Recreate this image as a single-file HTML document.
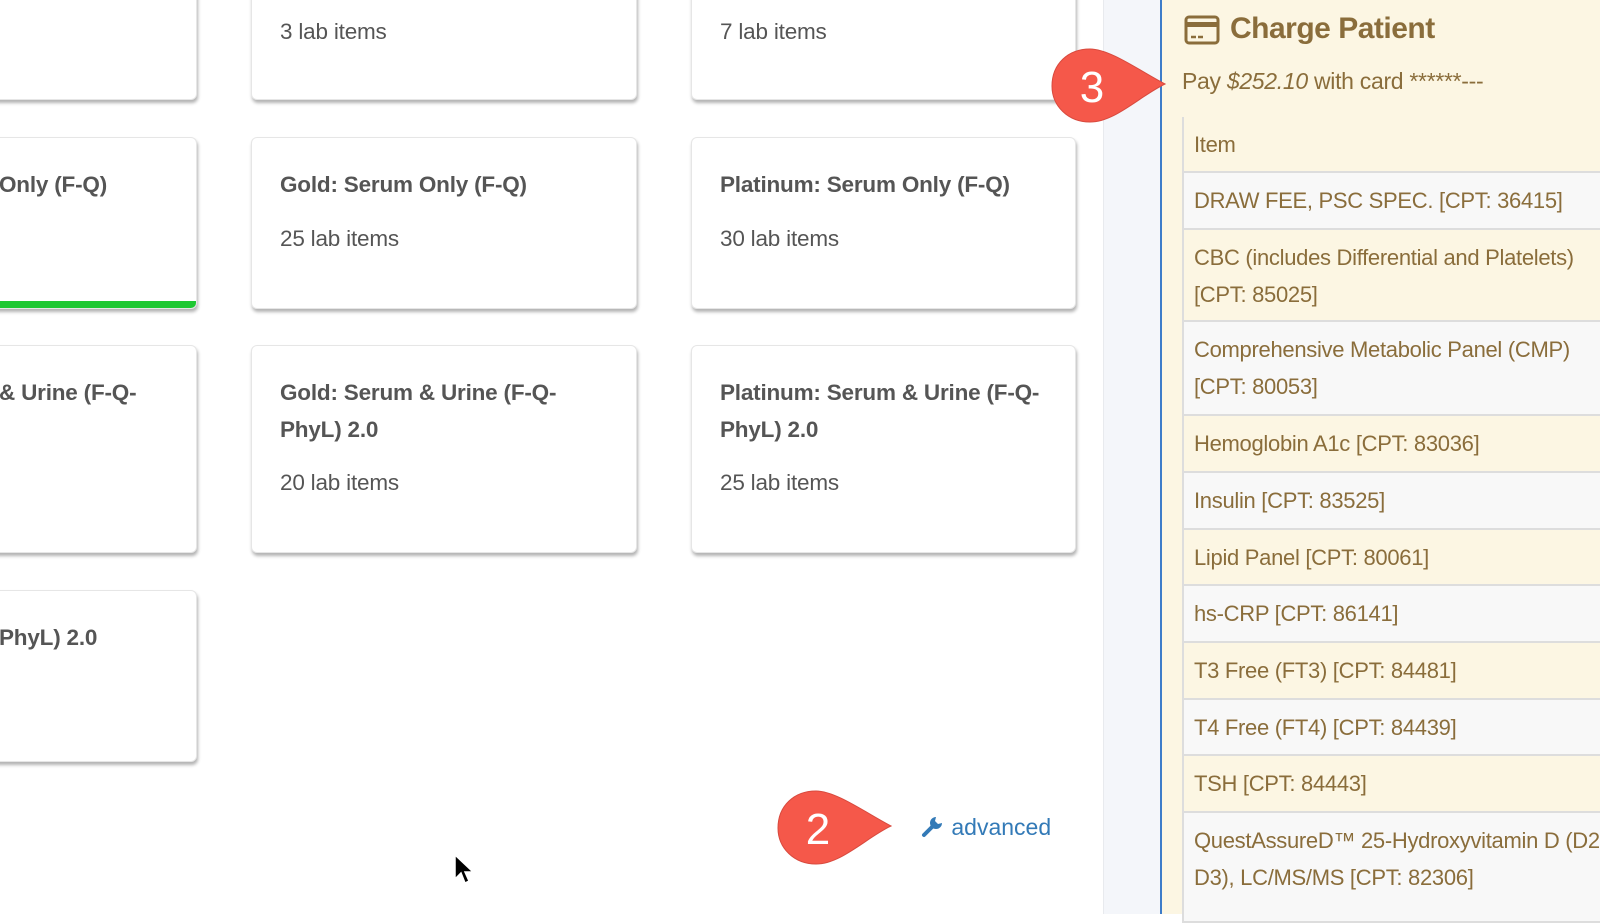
<!DOCTYPE html>
<html><head><meta charset="utf-8"><style>
*{box-sizing:border-box;margin:0;padding:0}
body{width:1600px;height:914px;overflow:hidden;background:#fff;font-family:"Liberation Sans",sans-serif;position:relative}
.card{position:absolute;background:#fff;border:1px solid #e6e6e6;border-radius:6px;box-shadow:1px 3px 3px rgba(0,0,0,.3);color:#555}
.card .t{position:absolute;left:28px;font-weight:bold;font-size:22.5px;line-height:37px;letter-spacing:-0.2px}
.card .s{position:absolute;left:28px;font-size:22.5px;letter-spacing:-0.2px}
.strip{position:absolute;left:1103px;top:0;width:58px;height:914px;background:#f4f6fa;border-left:1px solid #e8eaee}
.panel{position:absolute;left:1160px;top:0;width:440px;height:914px;background:#fcf6e3;border-left:2px solid #3d7cc9;color:#8a6d3b}
.row{position:absolute;left:20px;width:420px;border-left:2px solid #ddd;border-bottom:2px solid #ddd;font-size:22px;line-height:37px;padding:9px 10px;white-space:nowrap;overflow:hidden;letter-spacing:-0.3px}
.y{background:#fcf6e3}.g{background:#f8f8f8}
</style></head><body>
<div class="card" style="left:-10px;top:-10px;width:207px;height:110px"></div>
<div class="card" style="left:251px;top:-10px;width:386px;height:110px"><div class="s" style="top:28px">3 lab items</div></div>
<div class="card" style="left:691px;top:-10px;width:385px;height:110px"><div class="s" style="top:28px">7 lab items</div></div>

<div class="card" style="left:-10px;top:137px;width:207px;height:172px;overflow:hidden"><div class="t" style="left:8px;top:28px">Only (F-Q)</div><div style="position:absolute;left:0;right:0;bottom:0;height:7px;background:#1ec832"></div></div>
<div class="card" style="left:251px;top:137px;width:386px;height:172px"><div class="t" style="top:28px">Gold: Serum Only (F-Q)</div><div class="s" style="top:88px">25 lab items</div></div>
<div class="card" style="left:691px;top:137px;width:385px;height:172px"><div class="t" style="top:28px">Platinum: Serum Only (F-Q)</div><div class="s" style="top:88px">30 lab items</div></div>

<div class="card" style="left:-10px;top:345px;width:207px;height:208px"><div class="t" style="left:8px;top:28px">&amp; Urine (F-Q-</div></div>
<div class="card" style="left:251px;top:345px;width:386px;height:208px"><div class="t" style="top:28px;width:320px">Gold: Serum &amp; Urine (F-Q-PhyL) 2.0</div><div class="s" style="top:124px">20 lab items</div></div>
<div class="card" style="left:691px;top:345px;width:385px;height:208px"><div class="t" style="top:28px;width:330px">Platinum: Serum &amp; Urine (F-Q-PhyL) 2.0</div><div class="s" style="top:124px">25 lab items</div></div>

<div class="card" style="left:-10px;top:590px;width:207px;height:172px"><div class="t" style="left:8px;top:28px">PhyL) 2.0</div></div>

<svg style="position:absolute;left:776px;top:788px" width="118" height="80" viewBox="0 0 118 80"><path d="M40 3 C60 3 90 25 115 38 C90 50 65 76 40 76 C18 76 2 60 2 40 C2 18 18 3 40 3Z" fill="#f5584a" stroke="#d84a3e" stroke-width="1"/><text x="42" y="56" fill="#fff" font-size="44" font-family="Liberation Sans,sans-serif" text-anchor="middle">2</text></svg>
<div style="position:absolute;left:921px;top:814px;color:#337ab7;font-size:23px">
<svg width="24" height="24" viewBox="0 0 24 24" style="vertical-align:-3px"><path d="M3 21 L12 12" stroke="#337ab7" stroke-width="4" stroke-linecap="round"/><path d="M15 3 a6 6 0 1 0 6 6 l-4 1 -3 -3 z" fill="#337ab7"/></svg> advanced</div>
<svg style="position:absolute;left:452px;top:853px" width="24" height="34" viewBox="0 0 24 34"><path d="M3 2 L3 26 L9 20 L13 30 L17 28 L13 19 L21 19 Z" fill="#000" stroke="#fff" stroke-width="1.5"/></svg>

<div class="strip"></div>
<div class="panel">
<svg style="position:absolute;left:22px;top:14px" width="36" height="32" viewBox="0 0 36 32"><rect x="2" y="3" width="32" height="26" rx="3" fill="none" stroke="#8a6d3b" stroke-width="3"/><rect x="2" y="8" width="32" height="5" fill="#8a6d3b"/><path d="M7 23h5M14 23h5" stroke="#8a6d3b" stroke-width="2.5"/></svg>
<div style="position:absolute;left:68px;top:12px;font-size:30px;font-weight:bold;letter-spacing:-0.5px">Charge Patient</div>
<div style="position:absolute;left:20px;top:68px;font-size:23px;letter-spacing:-0.3px">Pay <i>$252.10</i> with card ******---</div>
<div class="row y" style="top:117px;height:56px">Item</div>
<div class="row g" style="top:173px;height:57px">DRAW FEE, PSC SPEC. [CPT: 36415]</div>
<div class="row y" style="top:230px;height:92px">CBC (includes Differential and Platelets)<br>[CPT: 85025]</div>
<div class="row g" style="top:322px;height:94px">Comprehensive Metabolic Panel (CMP)<br>[CPT: 80053]</div>
<div class="row y" style="top:416px;height:57px">Hemoglobin A1c [CPT: 83036]</div>
<div class="row g" style="top:473px;height:57px">Insulin [CPT: 83525]</div>
<div class="row y" style="top:530px;height:56px">Lipid Panel [CPT: 80061]</div>
<div class="row g" style="top:586px;height:57px">hs-CRP [CPT: 86141]</div>
<div class="row y" style="top:643px;height:57px">T3 Free (FT3) [CPT: 84481]</div>
<div class="row g" style="top:700px;height:56px">T4 Free (FT4) [CPT: 84439]</div>
<div class="row y" style="top:756px;height:57px">TSH [CPT: 84443]</div>
<div class="row g" style="top:813px;height:110px">QuestAssureD™ 25-Hydroxyvitamin D (D2,<br>D3), LC/MS/MS [CPT: 82306]</div>
</div>
<svg style="position:absolute;left:1050px;top:46px" width="118" height="80" viewBox="0 0 118 80"><path d="M40 3 C60 3 90 25 115 38 C90 50 65 76 40 76 C18 76 2 60 2 40 C2 18 18 3 40 3Z" fill="#f5584a" stroke="#d84a3e" stroke-width="1"/><text x="42" y="56" fill="#fff" font-size="44" font-family="Liberation Sans,sans-serif" text-anchor="middle">3</text></svg>
</body></html>
